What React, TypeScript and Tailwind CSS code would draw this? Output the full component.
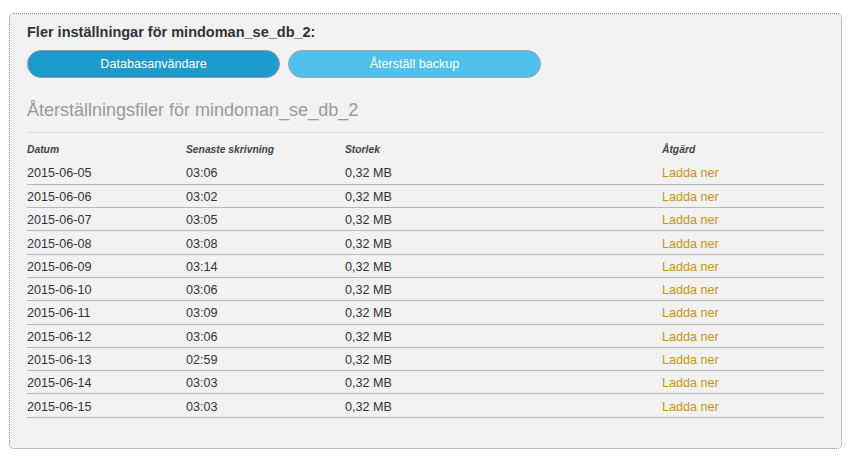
const rows = [
  ["2015-06-05", "03:06"],
  ["2015-06-06", "03:02"],
  ["2015-06-07", "03:05"],
  ["2015-06-08", "03:08"],
  ["2015-06-09", "03:14"],
  ["2015-06-10", "03:06"],
  ["2015-06-11", "03:09"],
  ["2015-06-12", "03:06"],
  ["2015-06-13", "02:59"],
  ["2015-06-14", "03:03"],
  ["2015-06-15", "03:03"],
];

export default function App() {
  return (
    <div className="h-[463px] w-[851px] bg-white pl-[9px] pt-[13px] font-['Liberation_Sans',Arial,sans-serif] text-[#333]">
      <div className="h-[436px] w-[833px] rounded-[5px] border border-dotted border-[#8a8a8a] bg-[#f2f2f2] pl-[17px] pr-[16px] pt-[10px]">
        <h2 className="text-[14.5px] font-bold leading-[16px] text-[#333]">
          Fler inställningar för mindoman_se_db_2:
        </h2>
        <div className="mt-[10px] flex gap-[8px]">
          <button className="h-[28px] w-[253px] rounded-full border border-[#8e9aa3] bg-[#1e9bcd] text-[12.6px] text-white">
            Databasanvändare
          </button>
          <button className="h-[28px] w-[253px] rounded-full border border-[#9aa4aa] bg-[#50c1ec] text-[12.6px] text-white">
            Återställ backup
          </button>
        </div>
        <h3 className="mt-[21px] text-[18px] leading-[22px] text-[#9a9a9a]">
          Återställningsfiler för mindoman_se_db_2
        </h3>
        <div className="mt-[11px] border-t border-[#dcdcdc]" />
        <table className="w-[797px] table-fixed border-collapse">
          <colgroup>
            <col className="w-[159px]" />
            <col className="w-[159px]" />
            <col className="w-[317px]" />
            <col className="w-[162px]" />
          </colgroup>
          <thead>
            <tr className="h-[28px] text-left align-bottom text-[10.3px] font-bold italic text-[#444]">
              <th className="pb-[4px] font-bold">Datum</th>
              <th className="pb-[4px] font-bold">Senaste skrivning</th>
              <th className="pb-[4px] font-bold">Storlek</th>
              <th className="pb-[4px] font-bold">Åtgärd</th>
            </tr>
          </thead>
          <tbody>
            {rows.map(([date, time]) => (
              <tr key={date} className="h-[23.3px] border-b border-[#b8b8b8] text-[12.6px] leading-[14px]">
                <td className="pt-[2px]">{date}</td>
                <td className="pt-[2px]">{time}</td>
                <td className="pt-[2px]">0,32 MB</td>
                <td className="pt-[2px] text-[#c8940e]">Ladda ner</td>
              </tr>
            ))}
          </tbody>
        </table>
      </div>
    </div>
  );
}
